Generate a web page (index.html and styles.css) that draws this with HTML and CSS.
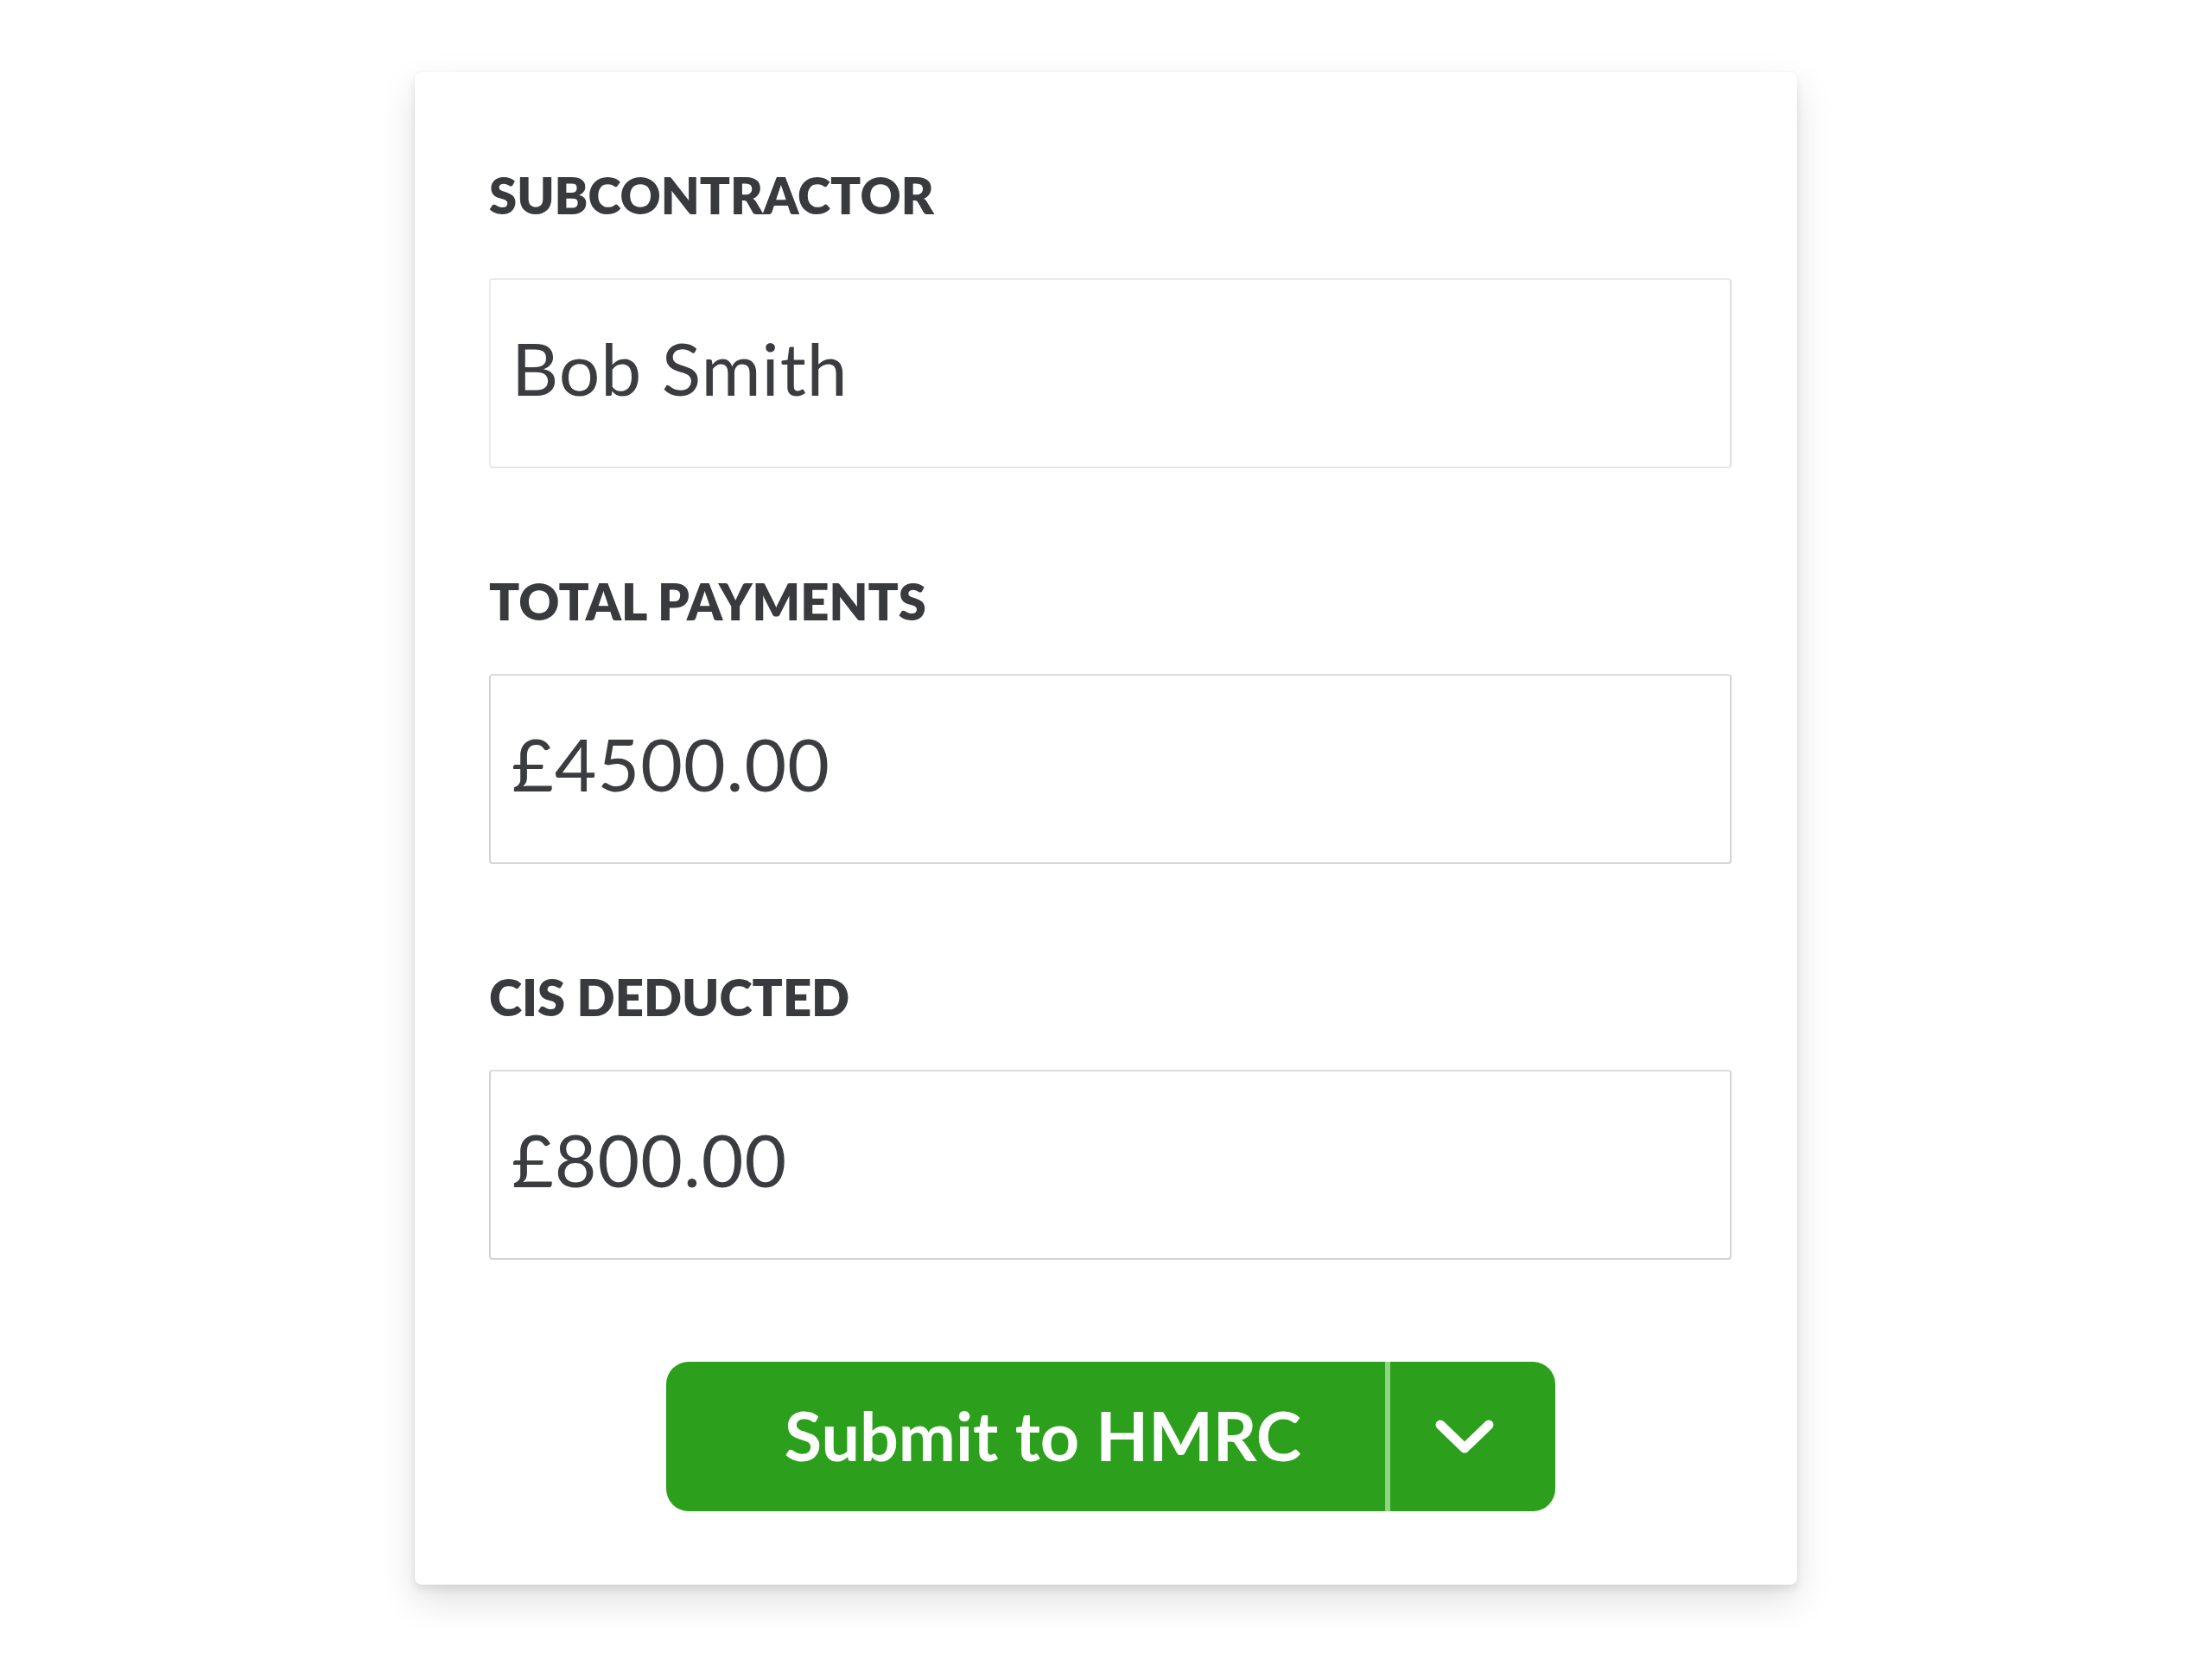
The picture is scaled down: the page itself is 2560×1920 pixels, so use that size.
FILE: index.html
```html
<!DOCTYPE html>
<html lang="en">
<head>
<meta charset="utf-8">
<title>Submit to HMRC</title>
<link rel="stylesheet" href="styles.css">
</head>
<body>
  <div class="page">
    <form class="card">
      <div class="fields">
        <div class="field">
          <div class="label">SUBCONTRACTOR</div>
          <div class="input input-soft">Bob Smith</div>
        </div>
        <div class="field">
          <div class="label">TOTAL PAYMENTS</div>
          <div class="input">£4500.00</div>
        </div>
        <div class="field">
          <div class="label">CIS DEDUCTED</div>
          <div class="input">£800.00</div>
        </div>
      </div>
      <div class="actions">
        <div class="split-button">
          <span class="split-main">Submit to HMRC</span>
          <span class="split-divider"></span>
          <span class="split-toggle">
            <svg class="chevron" width="68" height="40" viewBox="0 0 68 40" aria-hidden="true">
              <polyline points="6,6 34,33 62,6" fill="none" stroke="#ffffff" stroke-width="11" stroke-linecap="round" stroke-linejoin="round"/>
            </svg>
          </span>
        </div>
      </div>
    </form>
  </div>
</body>
</html>
```

FILE: styles.css
```css
* {
  box-sizing: border-box;
}

html, body {
  margin: 0;
  padding: 0;
  background: #ffffff;
}

body {
  font-family: "Lato", "Open Sans", sans-serif;
  color: #393a3d;
}

.page {
  min-height: 1920px;
  padding-top: 83px;
  display: flex;
  justify-content: center;
  align-items: flex-start;
}

.card {
  width: 1600px;
  height: 1751px;
  margin: 0;
  background: #ffffff;
  border-radius: 8px;
  box-shadow:
    0 0 2px rgba(0, 0, 0, 0.08),
    0 6px 10px rgba(0, 0, 0, 0.08),
    0 18px 44px rgba(0, 0, 0, 0.12);
  padding: 114px 76px 85px 86px;
  display: flex;
  flex-direction: column;
}

.fields {
  display: flex;
  flex-direction: column;
  gap: 125px;
}

.field {
  display: flex;
  flex-direction: column;
  gap: 55px;
}

.field:first-child {
  gap: 67px;
}

.label {
  font-size: 58px;
  line-height: 58px;
  font-weight: 800;
  letter-spacing: 0;
  color: #393a3d;
}

.input {
  height: 220px;
  border: 2px solid #d3d4d6;
  border-top-color: #dcdddf;
  border-radius: 4px;
  padding: 52px 20px 0 24px;
  font-size: 84px;
  line-height: 1.2;
  font-weight: 400;
  letter-spacing: 1px;
  color: #3b3c3f;
  background: #ffffff;
}

.input-soft {
  border-color: #ebebeb;
  border-right-color: #dedede;
  border-bottom-color: #e6e6e6;
}

.actions {
  margin-top: 118px;
  display: flex;
  justify-content: center;
}

.split-button {
  display: flex;
  align-items: stretch;
  height: 173px;
  width: 1029px;
  background: #2ca01c;
  border-radius: 26px;
  overflow: hidden;
  color: #ffffff;
}

.split-main {
  flex: 1;
  display: flex;
  align-items: center;
  justify-content: center;
  padding-left: 41px;
  font-size: 79px;
  font-weight: 700;
  line-height: 1;
  padding-bottom: 4px;
}

.split-divider {
  width: 6px;
  background: #8fd481;
}

.split-toggle {
  width: 191px;
  display: flex;
  align-items: center;
  justify-content: center;
  padding-right: 18px;
}

.chevron {
  display: block;
}
```
